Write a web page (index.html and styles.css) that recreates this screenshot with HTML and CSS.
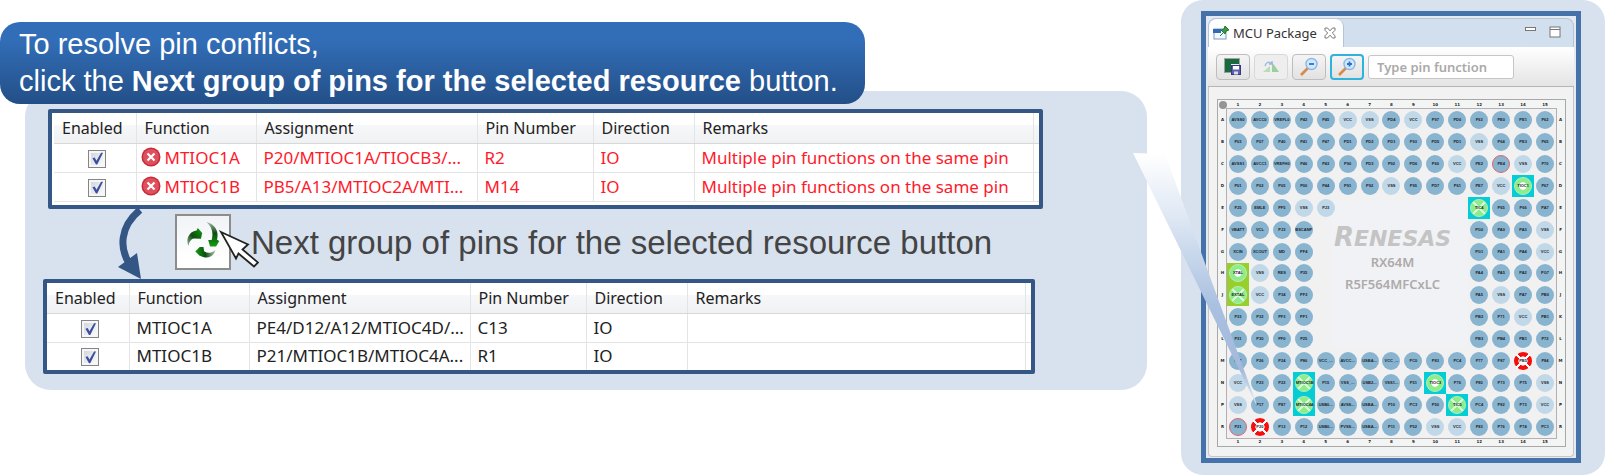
FILE: index.html
```html
<!DOCTYPE html>
<html lang="en">
<head>
<meta charset="utf-8">
<title>Resolving pin conflicts</title>
<link rel="stylesheet" href="styles.css">
</head>
<body>
<main class="page">
  <section class="guide">
    <h1 class="banner">To resolve pin conflicts,<br>click the <b>Next group of pins for the selected resource</b> button.</h1>
    <div class="panel">
      <div class="frame frame-before">
        <table class="pins-table">
          <colgroup><col class="c-enabled"><col class="c-function"><col class="c-assign"><col class="c-number"><col class="c-direction"><col><col class="c-end"></colgroup>
          <thead><tr><th>Enabled</th><th>Function</th><th>Assignment</th><th>Pin Number</th><th>Direction</th><th>Remarks</th><th></th></tr></thead>
          <tbody class="conflict">
            <tr><td class="tick"><input type="checkbox" checked aria-label="Enable MTIOC1A"></td><td><svg class="error" viewBox="0 0 20 20"><circle cx="10" cy="10" r="9.500" fill="#c9283a"/><circle cx="10" cy="10" r="8" fill="#e0505c"/><path d="M6.500 6.500l7 7M13.500 6.500l-7 7" stroke="#fff" stroke-width="2.200"/></svg>MTIOC1A</td><td>P20/MTIOC1A/TIOCB3/...</td><td>R2</td><td>IO</td><td>Multiple pin functions on the same pin</td><td></td></tr>
            <tr><td class="tick"><input type="checkbox" checked aria-label="Enable MTIOC1B"></td><td><svg class="error" viewBox="0 0 20 20"><circle cx="10" cy="10" r="9.500" fill="#c9283a"/><circle cx="10" cy="10" r="8" fill="#e0505c"/><path d="M6.500 6.500l7 7M13.500 6.500l-7 7" stroke="#fff" stroke-width="2.200"/></svg>MTIOC1B</td><td>PB5/A13/MTIOC2A/MTI...</td><td>M14</td><td>IO</td><td>Multiple pin functions on the same pin</td><td></td></tr>
          </tbody>
        </table>
      </div>
      <div class="step">
        <svg class="arrow" viewBox="0 0 30 70"><path d="M25 1C4 18 5 40 14 54" fill="none" stroke="#335684" stroke-width="7"/><path d="M3 58L22 44L26 70Z" fill="#335684"/></svg>
        <div class="next-wrap">
          <button class="next" id="next" type="button" aria-labelledby="next-label">
            <svg viewBox="0 0 165 165">
              <defs>
                <linearGradient id="g1" x1="0" y1="1" x2="1" y2="0"><stop offset="0" stop-color="#9cb59c"/><stop offset=".45" stop-color="#0c4d10"/><stop offset="1" stop-color="#12a012"/></linearGradient>
                <linearGradient id="g2" x1="0" y1="0" x2="0" y2="1"><stop offset="0" stop-color="#a9bda9"/><stop offset=".45" stop-color="#0c4d10"/><stop offset="1" stop-color="#12a012"/></linearGradient>
                <linearGradient id="g3" x1="1" y1="0" x2="0" y2="0"><stop offset="0" stop-color="#b4c6b4"/><stop offset=".5" stop-color="#0c4d10"/><stop offset="1" stop-color="#12a012"/></linearGradient>
              </defs>
              <path fill="url(#g1)" d="M37 96C27 76 36 50 62 46L66 38L80 54L76 72L54 71C44 72 37 84 37 96Z"/>
              <path fill="url(#g2)" d="M93 19C122 26 134 50 127 75L134 79L124 97L105 97L99 76L110 76C116 56 112 34 93 19Z"/>
              <path fill="url(#g3)" d="M122 108C118 126 102 136 83 130L72 126L58 113L72 98L84 98L86 112C98 120 110 118 122 108Z"/>
            </svg>
          </button>
          <svg class="cursor" viewBox="0 0 40 38"><path d="M2 2L29 14.500L23.500 19.500L39 32.500L35 36.500L19.500 23.500L17 28.500Z" fill="#fff" stroke="#222" stroke-width="1.800"/></svg>
        </div>
        <label class="next-label" id="next-label" for="next">Next group of pins for the selected resource button</label>
      </div>
      <div class="frame frame-after">
        <table class="pins-table">
          <colgroup><col class="c-enabled"><col class="c-function"><col class="c-assign"><col class="c-number"><col class="c-direction"><col><col class="c-end"></colgroup>
          <thead><tr><th>Enabled</th><th>Function</th><th>Assignment</th><th>Pin Number</th><th>Direction</th><th>Remarks</th><th></th></tr></thead>
          <tbody>
            <tr><td class="tick"><input type="checkbox" checked aria-label="Enable MTIOC1A"></td><td>MTIOC1A</td><td>PE4/D12/A12/MTIOC4D/...</td><td>C13</td><td>IO</td><td></td><td></td></tr>
            <tr><td class="tick"><input type="checkbox" checked aria-label="Enable MTIOC1B"></td><td>MTIOC1B</td><td>P21/MTIOC1B/MTIOC4A...</td><td>R1</td><td>IO</td><td></td><td></td></tr>
          </tbody>
        </table>
      </div>
    </div>
  </section>

  <aside class="package">
    <svg class="pointer" viewBox="0 0 126 256" aria-hidden="true"><defs><linearGradient id="ray" x1="0" y1="0" x2="0" y2="1"><stop offset="0" stop-color="#fff"/><stop offset=".25" stop-color="#dfe8f4"/><stop offset=".6" stop-color="#a9c0e0"/><stop offset=".85" stop-color="#a4b9db"/><stop offset="1" stop-color="#eef4fa"/></linearGradient></defs><path d="M0 0L32 1L125 255Z" fill="url(#ray)"/></svg>
    <div class="view">
      <div class="tabs">
        <div class="tab">
          <svg class="tab-icon" viewBox="0 0 16 16"><rect x="1" y="4" width="12" height="10" fill="#f4f8ff" stroke="#7d99bd"/><rect x="0" y="4" width="8" height="4" fill="#2f6cb5"/><path d="M7 11L10 8" stroke="#23772f"/><path d="M8 5L12 9L13 6L16 5L12 1L11 4Z" fill="#3a9a45" stroke="#23772f"/></svg>
          <span>MCU Package</span>
          <svg class="close" viewBox="0 0 12 12"><path d="M1 1h2.500L6 3.800L8.500 1H11v2.300L8.300 6L11 8.700V11H8.500L6 8.200L3.500 11H1V8.700L3.700 6L1 3.300Z" fill="#fff" stroke="#777"/></svg>
        </div>
        <div class="window-icons">
          <svg viewBox="0 0 12 12"><rect x=".5" y="1.500" width="10" height="3" fill="#fff" stroke="#777"/></svg>
          <svg viewBox="0 0 12 12"><rect x="1" y="1" width="10" height="10" fill="#fff" stroke="#777"/><path d="M1 3.500H11" stroke="#777"/></svg>
        </div>
      </div>
      <div class="toolbar">
        <button class="tool" type="button" aria-label="Save package image"><svg viewBox="0 0 20 20"><rect x="1.500" y="1.500" width="15" height="14" fill="none" stroke="#555" stroke-dasharray="1 1"/><path d="M2 2H16V7H8V15H2Z" fill="#176b3e"/><rect x="8.500" y="8.500" width="9" height="9" fill="#5a5fb5" stroke="#35358a"/><rect x="10" y="9" width="6" height="3.500" fill="#fff"/><rect x="11" y="14.500" width="4" height="3" fill="#ddd"/></svg></button>
        <button class="tool dim" type="button" aria-label="Rotate package" disabled><svg viewBox="0 0 20 20"><path d="M2 15L9 9V15Z" fill="#b8dcb8"/><path d="M11 15V5L18 15Z" fill="#9ccf9f"/><path d="M4 9C5 5 8 4 11 7M11 4V7H8" fill="none" stroke="#9db8dc" stroke-width="1.400"/></svg></button>
        <button class="tool" type="button" aria-label="Zoom out"><svg viewBox="0 0 20 20"><path d="M2 18L9 11" stroke="#d98a4a" stroke-width="2.600"/><circle cx="12.500" cy="7" r="5.500" fill="#cfe8fb" stroke="#8db6e6" stroke-width="1.400"/><path d="M10 7H15" stroke="#2b72c8" stroke-width="1.800"/></svg></button>
        <button class="tool active" type="button" aria-label="Zoom in"><svg viewBox="0 0 20 20"><path d="M2 18L9 11" stroke="#d98a4a" stroke-width="2.600"/><circle cx="12.500" cy="7" r="5.500" fill="#cfe8fb" stroke="#8db6e6" stroke-width="1.400"/><path d="M10 7H15M12.500 4.500V9.500" stroke="#2b72c8" stroke-width="1.800"/></svg></button>
        <input class="search" type="text" placeholder="Type pin function" aria-label="Type pin function">
      </div>
      <div class="canvas">
        <div class="chip">
          <span class="corner"></span>
          <div class="axis axis-x top"></div>
          <div class="axis axis-y left"></div>
          <div class="pins" id="pins">
            <div class="core"><div class="brand"><span>R</span>ENESAS</div><div>RX64M</div><div>R5F564MFCxLC</div></div>
          </div>
          <div class="axis axis-y right"></div>
          <div class="axis axis-x bottom"></div>
        </div>
      </div>
    </div>
  </aside>
</main>
<script src="pins.js"></script>
</body>
</html>
```
FILE: styles.css
```css
* { box-sizing: border-box; }
body { margin: 0; background: #fff; font-family: "Noto Sans", sans-serif; }

.page { display: grid; grid-template-columns: minmax(0, 1fr) 424px; gap: 34px; align-items: start; }

/* Left side */
.guide { padding-top: 22px; }
.banner {
  position: relative;
  z-index: 1;
  width: fit-content;
  margin: 0;
  padding: 4px 27px 4px 19px;
  border-radius: 20px;
  background: linear-gradient(#326eb8 20%, #234f87);
  color: #fff;
  font: 29px/37px "Liberation Sans", Arial, sans-serif;
}
.panel {
  margin: -13px 0 0 25px;
  padding: 18px 0 16px;
  border-radius: 26px;
  background: #d8e1ee;
}
.frame { border: 4px solid #345785; border-radius: 2px; background: #fff; }
.frame-before { margin: 0 104px 0 23px; padding: 0 0 3px 2px; }
.frame-after { margin: 0 112px 0 18px; }

.pins-table { width: 100%; border-collapse: collapse; table-layout: fixed; font-size: 16px; line-height: 20px; color: #222; }
.c-enabled { width: 82px; }
.c-function { width: 120px; }
.c-assign { width: 221px; }
.c-number { width: 116px; }
.c-direction { width: 101px; }
.c-end { width: 6px; }
.pins-table th {
  height: 30px;
  padding: 1px 0 0 8px;
  border-right: 1px solid #e2e4e6;
  border-bottom: 1px solid #d8d8d8;
  background: linear-gradient(#fff 40%, #f6f7f9 40%, #f0f1f3);
  font-weight: 400;
  text-align: left;
  white-space: nowrap;
}
.pins-table td {
  height: 29px;
  padding: 0 0 0 7px;
  border-right: 1px solid #e4e4e4;
  border-bottom: 1px solid #e4e4e4;
  font-size: 17px;
  white-space: nowrap;
}
.frame-after th { height: 31px; }
.frame-after tr:last-child td { border-bottom: 0; height: 27px; }
.pins-table th:last-child, .pins-table td:last-child { border-right: 0; padding: 0; }
.conflict { color: #ff1a2a; }
.error { width: 20px; height: 20px; margin: -4px 4px 0 -3px; vertical-align: -3px; }
.pins-table .tick { padding: 2px 0 0 5px; text-align: center; line-height: 0; }
.tick input {
  appearance: none;
  width: 18px;
  height: 18px;
  margin: 0;
  border: 1px solid #858585;
  background: linear-gradient(135deg, #ccd2da, #fff);
  box-shadow: inset 0 0 0 2px #f6f6f6;
}
.tick input:checked::before {
  content: "";
  display: block;
  width: 16px;
  height: 16px;
  background: #3c4f9c;
  clip-path: polygon(20% 48%, 34% 44%, 45% 64%, 74% 14%, 86% 14%, 50% 88%, 42% 88%);
}

.step { display: flex; align-items: start; height: 70px; padding-left: 90px; }
.arrow { flex: none; width: 30px; height: 70px; }
.next-wrap { position: relative; flex: none; margin: 5px 20px 0 30px; }
.next { display: block; width: 56px; height: 56px; padding: 0; border: 2px solid #8c8c8a; background: linear-gradient(#f1f3f7, #fff 80%); }
.next svg { display: block; width: 100%; height: 100%; }
.cursor { position: absolute; left: 44px; top: 16px; width: 40px; height: 38px; }
.next-label { padding-top: 14px; color: #444; font: 33px/40px "Liberation Sans", Arial, sans-serif; white-space: nowrap; }

/* Right side */
.package { position: relative; padding: 11px 24px 12px 20px; border-radius: 22px; background: #d8e1ee; }
.pointer { position: absolute; z-index: 2; left: -48px; top: 153px; width: 126px; height: 256px; }
.view { padding: 2px 2px 1px; border: 5px solid #4472a9; background: #e4eaf2; }
.tabs { display: flex; justify-content: space-between; height: 29px; border: 1px solid #b6c4d8; border-bottom: 0; border-radius: 8px 8px 0 0; background: #d2dfee; }
.tab { display: flex; align-items: center; width: 135px; padding-left: 4px; border-right: 1px solid #b6c4d8; border-radius: 8px 8px 0 0; background: #fff; color: #333; font-size: 13px; white-space: nowrap; }
.tab-icon { width: 16px; height: 16px; margin-right: 4px; }
.close { width: 12px; height: 12px; margin-left: 7px; }
.window-icons { display: flex; gap: 12px; padding: 7px 12px 0 0; }
.window-icons svg { width: 12px; height: 12px; }
.toolbar { display: flex; align-items: center; gap: 4px; height: 40px; padding: 0 8px; border-bottom: 1px solid #b5b5b5; background: linear-gradient(#fff, #e4e4e4); }
.tool { display: grid; place-items: center; width: 34px; height: 26px; padding: 0; border: 1px solid #bdbdbd; border-radius: 4px; background: linear-gradient(#f4f4f4, #e2e2e2); }
.tool svg { width: 20px; height: 20px; }
.tool.dim { border-color: #d8d8d8; background: #eee; }
.tool.active { border: 2px solid #2fb2dc; }
.search { width: 146px; height: 24px; padding: 0 8px; border: 1px solid #c6c6c6; border-radius: 3px; background: #fff; font: 600 13px "Noto Sans", sans-serif; }
.search::placeholder { color: #aaa; opacity: 1; }

.canvas { padding: 12px 7px 9px 8px; border: 1px solid #c6c6c6; border-top: 0; border-radius: 0 0 4px 4px; background: #f2f2f2; }
.chip {
  position: relative;
  display: grid;
  grid-template: 9px auto 8px / 9px minmax(0, 1fr) 9px;
  border: 1px solid #a8a8a8;
  background: #f3f5f4;
}
.corner { position: absolute; left: 1px; top: 1px; width: 8px; height: 8px; border-radius: 50%; background: #989494; }
.axis { display: grid; color: #222; font: 700 4px/8px "DejaVu Sans", sans-serif; text-align: center; align-items: center; }
.axis-x { grid-column: 2; grid-template-columns: repeat(15, 1fr); }
.axis-y { grid-template-rows: repeat(15, 1fr); grid-row: 2; }
.top { grid-row: 1; }
.bottom { grid-row: 3; }
.left { grid-column: 1; }
.right { grid-column: 3; }
.pins {
  display: grid;
  grid-column: 2;
  grid-row: 2;
  grid-template: repeat(15, minmax(0, 1fr)) / repeat(15, minmax(0, 1fr));
  aspect-ratio: 1;
  outline: 1px solid #b5afb1;
  background: #f2f1f2;
}
.cell { display: grid; place-items: center; }
.cell.cyan { background: #06ccd6; }
.cell.lime { background: #98cf2c; }
.dot {
  display: grid;
  place-items: center;
  width: 18px;
  height: 18px;
  border-radius: 50%;
  background: #88b4d0;
  color: #1c2228;
  font: 700 4px/8px "Liberation Sans", Arial, sans-serif;
  white-space: nowrap;
}
.light { background: #c0d8e7; }
.outlined { border: 1px solid #dd6870; }
.cross, .ring { border: 1px solid #b5f0b8; }
.cross { background: linear-gradient(45deg, transparent 46%, #d5f8d5 46% 54%, transparent 54%), linear-gradient(-45deg, #8fec8b 46%, #d5f8d5 46% 54%, #8fec8b 54%); }
.ring { background: radial-gradient(circle closest-side, #fff 42%, #8fec8b 52%); }
.clash { background: radial-gradient(circle closest-side, #fff 48%, transparent 54%), linear-gradient(45deg, transparent 46%, #fff 46% 54%, transparent 54%), linear-gradient(-45deg, #f80d0d 46%, #fff 46% 54%, #f80d0d 54%); }

.core {
  grid-area: 5 / 5 / 12 / 12;
  margin: 4px 0 4px 16px;
  padding: 24px 14px 0 0;
  background: #f1f2f5;
  color: #aeaaaa;
  font-size: 13px;
  font-weight: 600;
  line-height: 22px;
  text-align: center;
  white-space: nowrap;
}
.brand { color: #c4c4c4; font: italic 700 22px/24px "DejaVu Sans", sans-serif; }
.brand span { font-size: 26px; }
```
FILE: pins.js
```javascript
const rowNames = [..."ABCDEFGHJKLMNPR"];

// "." marks a position without a ball.
const layout = [
  "AVSS0 AVCC0 VREFL0 P42 P45 VCC VSS PD4 VCC P97 PD0 P63 PE0 PE1 P62",
  "P03 P07 P40 P41 P47 PD1 PD2 PD1 P93 PD5 PD1 VSS P64 PE3 P65",
  "AVSS1 AVCC1 VREFH0 P46 P43 P90 PD3 P92 PD6 P60 VCC PE2 PE4 VSS P70",
  "P01 P02 P05 P00 P44 P91 P92 VSS P95 PD7 P61 PE7 VCC TIOC1 P67",
  "PJ5 EMLE PF5 VSS PJ3 . . . . . . TIC4 P65 P66 PA7",
  "VBATT VCL PJ3 BSCANP . . . . . . . PG0 PA0 PA3 VSS",
  "XCIN XCOUT MD PF4 . . . . . . . PG1 PA1 PA4 VCC",
  "XTAL VSS RES P35 . . . . . . . PA4 PA5 PA2 PG7",
  "EXTAL VCC P34 PF2 . . . . . . . PA5 VSS PA7 PB0",
  "P33 P32 PF3 PF1 . . . . . . . PB2 P71 VCC PB1",
  "P31 P30 PF0 P25 . . . . . . . PB3 PB4 PB1 P72",
  "P27 P26 P24 P86 VCC_USB AVCC_USB USBA_DM VCC_USB PC0 P83 PC4 P77 P87 PB5 P84",
  "VCC P23 P22 MTIOC1B P15 VSS_USB USB2_DM VSS1_USB P51 TIOC3 P76 P80 P73 P75 VSS",
  "VSS P17 P87 MTIOC4A USB0_DP AVSS_USB USBA_DP P10 PC3 P50 TIC5 PC4 P82 P73 VCC",
  "P21 P20 P13 P12 USB0_DM PVSS_USB USBA_DM P11 P52 VSS VCC P83 P76 P74 PC1"
];

const styles = {
  light: "A6 A7 A9 B12 C11 C14 D8 D13 E4 E5 F15 G15 H2 J2 J13 K14 N1 N15 P1 P15 R10 R11",
  outlined: "C13 R1",
  clash: "M14 R2",
  ring: "D14 H1 N10",
  cross: "E12 J1 N4 P4 P11"
};
const lime = ["H1", "J1"];

const styleOf = {};
for (const [style, places] of Object.entries(styles)) {
  for (const place of places.split(" ")) styleOf[place] = style;
}

const pins = document.getElementById("pins");
layout.forEach((line, r) => {
  line.split(" ").forEach((name, c) => {
    if (name === ".") return;
    const place = rowNames[r] + (c + 1);
    const style = styleOf[place] || "";
    const cell = document.createElement("span");
    cell.className = "cell";
    if (style === "ring" || style === "cross") cell.classList.add(lime.includes(place) ? "lime" : "cyan");
    cell.style.gridArea = `${r + 1} / ${c + 1}`;
    const dot = document.createElement("span");
    dot.className = `dot ${style}`;
    dot.textContent = name.includes("_") ? name.slice(0, 4) + "..." : name;
    cell.append(dot);
    pins.append(cell);
  });
});

function fillAxis(selector, labels) {
  document.querySelectorAll(selector).forEach((axis) => {
    for (const label of labels) {
      const mark = document.createElement("span");
      mark.textContent = label;
      axis.append(mark);
    }
  });
}
fillAxis(".axis-x", rowNames.map((_, i) => i + 1));
fillAxis(".axis-y", rowNames);
```
